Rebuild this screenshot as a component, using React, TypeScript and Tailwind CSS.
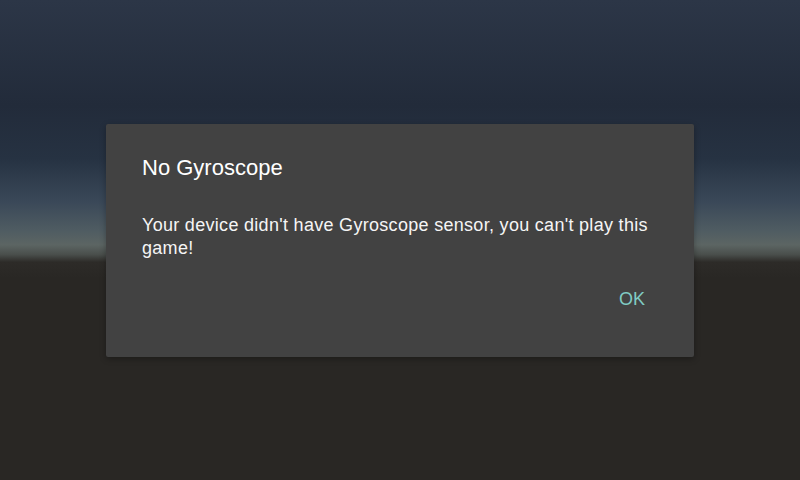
export default function App(): React.ReactElement {
  return (
    <div className="relative w-[800px] h-[480px] overflow-hidden bg-[linear-gradient(to_bottom,#2c3647_0%,#222b3a_22%,#263242_33%,#3a4858_42%,#4f5c62_48%,#5c6563_51%,#4a4f4c_53%,#2d2b28_54.6%,#292724_58%,#292724_100%)] flex items-center justify-center font-['Liberation_Sans',sans-serif]">
      {/* Dialog */}
      <div className="w-[588px] h-[233px] bg-[#424242] rounded-[2px] shadow-[0_2px_6px_rgba(0,0,0,0.3)] flex flex-col px-[36px] pt-[30px]">
        <h1 className="text-[22px] leading-[28px] text-white">No Gyroscope</h1>
        <p className="mt-[32px] text-[18px] leading-[23px] tracking-[0.3px] text-[#f5f5f5]">
          Your device didn't have Gyroscope sensor, you can't play this game!
        </p>
        <div className="mt-[27px] flex justify-end pr-[13px]">
          <button className="text-[18px] leading-[24px] text-[#80cbc4]">OK</button>
        </div>
      </div>
    </div>
  );
}
